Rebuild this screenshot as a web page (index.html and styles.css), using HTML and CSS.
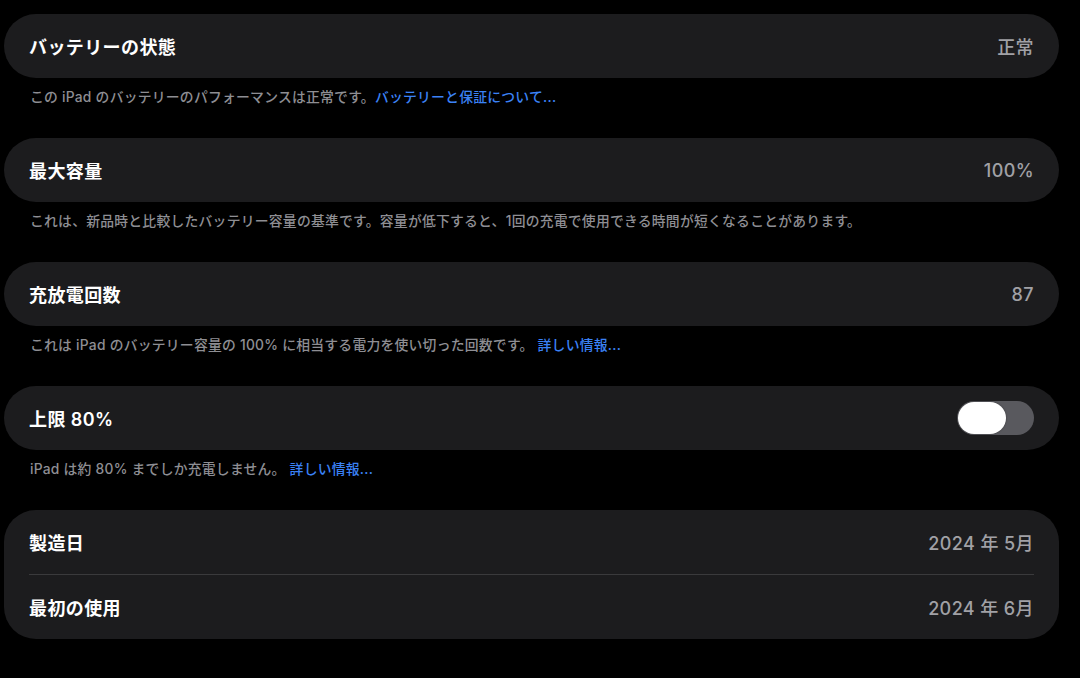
FILE: index.html
```html
<!DOCTYPE html>
<html lang="ja">
<head>
<meta charset="utf-8">
<title>バッテリー</title>
<link rel="stylesheet" href="styles.css">
</head>
<body>
<main class="page">
  <section class="group">
    <div class="card">
      <div class="row"><span class="label">バッテリーの状態</span><span class="value">正常</span></div>
    </div>
    <p class="footer">この iPad のバッテリーのパフォーマンスは正常です。<a class="link" href="#">バッテリーと保証について...</a></p>
  </section>
  <section class="group">
    <div class="card">
      <div class="row"><span class="label">最大容量</span><span class="value">100%</span></div>
    </div>
    <p class="footer">これは、新品時と比較したバッテリー容量の基準です。容量が低下すると、1回の充電で使用できる時間が短くなることがあります。</p>
  </section>
  <section class="group">
    <div class="card">
      <div class="row"><span class="label">充放電回数</span><span class="value">87</span></div>
    </div>
    <p class="footer">これは iPad のバッテリー容量の 100% に相当する電力を使い切った回数です。 <a class="link" href="#">詳しい情報...</a></p>
  </section>
  <section class="group">
    <div class="card">
      <div class="row"><span class="label">上限 80%</span><span class="toggle"><span class="knob"></span></span></div>
    </div>
    <p class="footer">iPad は約 80% までしか充電しません。 <a class="link" href="#">詳しい情報...</a></p>
  </section>
  <section class="group">
    <div class="card">
      <div class="row"><span class="label">製造日</span><span class="value">2024 年 5月</span></div>
      <div class="divider"></div>
      <div class="row"><span class="label">最初の使用</span><span class="value">2024 年 6月</span></div>
    </div>
  </section>
</main>
</body>
</html>
```

FILE: styles.css
```css
html, body {
  margin: 0;
  padding: 0;
  background: #000;
}
body {
  font-family: "Inter", "Noto Sans CJK JP", sans-serif;
  color: #fff;
  -webkit-font-smoothing: antialiased;
}
.page {
  display: flex;
  flex-direction: column;
  padding: 14px 21px 0 4px;
}
.group {
  display: flex;
  flex-direction: column;
}
.card {
  background: #1c1c1e;
  border-radius: 32px;
  display: flex;
  flex-direction: column;
}
.row {
  height: 64px;
  display: flex;
  align-items: center;
  justify-content: space-between;
  padding: 0 25px;
}
.label {
  font-size: 18px;
  letter-spacing: 0.4px;
  font-weight: 600;
  color: #fff;
}
.value {
  font-size: 18px;
  letter-spacing: 0.4px;
  font-weight: 500;
  color: #a1a1a6;
}
.divider {
  height: 1px;
  background: #3a3a3c;
  margin: 0 25px;
}
.footer {
  margin: 0;
  padding: 10px 26px 32px;
  line-height: 18px;
  font-size: 13.8px;
  letter-spacing: 0.25px;
  font-weight: 500;
  color: #8e8e93;
}
.link {
  color: #3b82f6;
  text-decoration: none;
}
.toggle {
  width: 77px;
  height: 34px;
  border-radius: 17px;
  background: #59595e;
  display: flex;
  align-items: center;
  padding: 0 1px;
  box-sizing: border-box;
}
.knob {
  width: 48px;
  height: 32px;
  border-radius: 16px;
  background: #fff;
  box-shadow: 0 0 2px rgba(0,0,0,0.4);
}
```
